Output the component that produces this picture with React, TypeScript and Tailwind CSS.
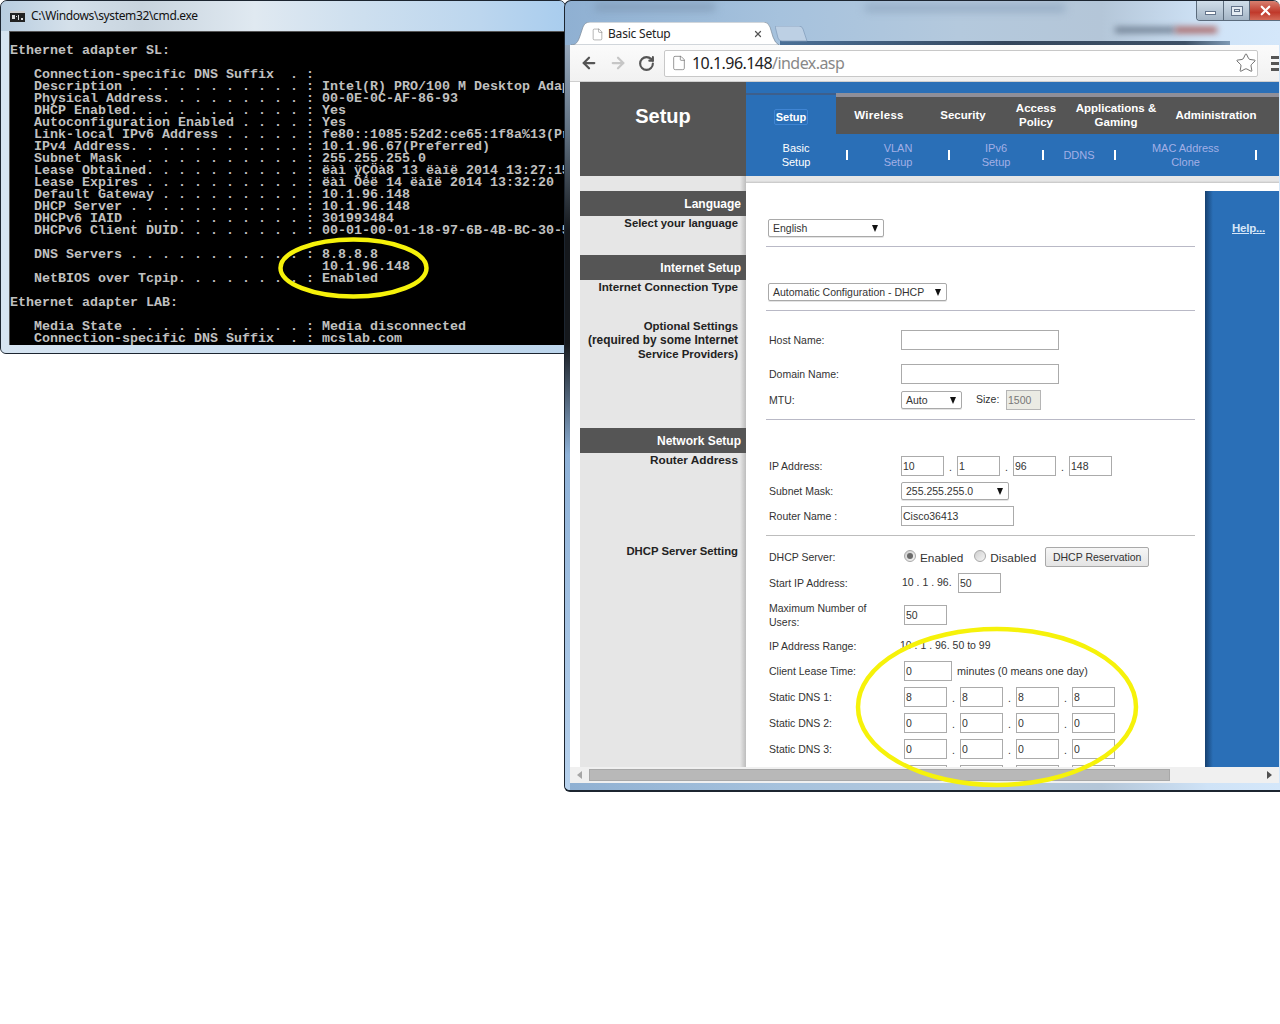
import React from "react";
import { ArrowLeft, ArrowRight, RotateCw, File, Star, X } from "lucide-react";

const cmdText = `Ethernet adapter SL:

   Connection-specific DNS Suffix  . :
   Description . . . . . . . . . . . : Intel(R) PRO/100 M Desktop Adapter
   Physical Address. . . . . . . . . : 00-0E-0C-AF-86-93
   DHCP Enabled. . . . . . . . . . . : Yes
   Autoconfiguration Enabled . . . . : Yes
   Link-local IPv6 Address . . . . . : fe80::1085:52d2:ce65:1f8a%13(Preferred)
   IPv4 Address. . . . . . . . . . . : 10.1.96.67(Preferred)
   Subnet Mask . . . . . . . . . . . : 255.255.255.0
   Lease Obtained. . . . . . . . . . : ëàì ÿÇÖà8 13 ëàîë 2014 13:27:15
   Lease Expires . . . . . . . . . . : ëàì Öêë 14 ëàîë 2014 13:32:20
   Default Gateway . . . . . . . . . : 10.1.96.148
   DHCP Server . . . . . . . . . . . : 10.1.96.148
   DHCPv6 IAID . . . . . . . . . . . : 301993484
   DHCPv6 Client DUID. . . . . . . . : 00-01-00-01-18-97-6B-4B-BC-30-5B

   DNS Servers . . . . . . . . . . . : 8.8.8.8
                                       10.1.96.148
   NetBIOS over Tcpip. . . . . . . . : Enabled

Ethernet adapter LAB:

   Media State . . . . . . . . . . . : Media disconnected
   Connection-specific DNS Suffix  . : mcslab.com`;

function CmdWindow() {
  return (
    <div className="absolute left-0 top-0 w-[566px] h-[354px] flex flex-col rounded-t-[7px] rounded-bl-[6px] border border-[#1c2530] overflow-hidden bg-[linear-gradient(90deg,#8fa0b2_0,#b9d3ec_40px,#b9d3ec_100%)]">
      <div className="h-[30px] shrink-0 flex items-center pl-[9px] gap-[6px] bg-[linear-gradient(90deg,#b8cde0_0%,#d4e0ea_12%,#c8d4de_25%,#e0e9f1_45%,#cfe0ef_62%,#bcd6ee_85%,#a9cdee_100%)]">
        <svg width="15" height="11" viewBox="0 0 15 11" className="shrink-0">
          <rect width="15" height="11" fill="#222" />
          <rect width="15" height="2" fill="#ccc" />
          <rect x="2" y="4" width="3" height="4" fill="#ddd" />
          <rect x="6" y="5" width="1" height="1" fill="#ddd" />
          <rect x="8" y="4" width="1" height="5" fill="#ddd" />
          <rect x="11" y="7" width="2" height="2" fill="#ddd" />
        </svg>
        <span className="font-['Noto_Sans',sans-serif] text-[12px] leading-none text-[#111] tracking-[-0.35px]">C:\Windows\system32\cmd.exe</span>
      </div>
      <div className="flex-1 min-h-0 flex bg-[linear-gradient(90deg,#d6e4f1,#bcd5ec)] pl-[8px]">
        <div className="flex-1 h-[314px] bg-black border-l border-t border-[#555] overflow-hidden pt-[13px]">
          <pre className="font-['Liberation_Mono',monospace] font-bold text-[13.33px] leading-[12px] text-[#c0c0c0] whitespace-pre">{cmdText}</pre>
        </div>
      </div>
    </div>
  );
}

const navFont = "font-['Liberation_Sans',Arial,sans-serif]";

function Sep() {
  return <div className="w-[2px] h-[10px] bg-white shrink-0" />;
}

function SubItem({ w, active, children }: { w: string; active?: boolean; children: React.ReactNode }) {
  return (
    <div className={`${w} shrink-0 text-center text-[11px] leading-[14px] ${active ? "text-white" : "text-[#a3afe6]"}`}>{children}</div>
  );
}

function TopItem({ w, children }: { w: string; children: React.ReactNode }) {
  return <div className={`${w} shrink-0 text-center font-bold text-[11.5px] leading-[14px] text-white`}>{children}</div>;
}

function Header() {
  return (
    <div className={`flex h-[94px] shrink-0 ${navFont}`}>
      <div className="w-[10px] bg-white shrink-0" />
      <div className="w-[166px] shrink-0 bg-[#555555] flex items-center justify-center pb-[26px]">
        <span className="text-white font-bold text-[20px] leading-none">Setup</span>
      </div>
      <div className="flex-1 flex flex-col bg-[#2a6fb7]">
        <div className="h-[52px] flex pt-[11px]">
          <div className="w-[90px] shrink-0 flex items-center justify-center border-t-2 border-[#3d5f8c] pt-[5px]">
            <span className="text-white font-bold text-[11px] leading-[14px] border border-[#3f85d4] rounded-[2px] px-[1px]">Setup</span>
          </div>
          <div className="flex-1 flex items-center bg-[#555555] border-t-[4px] border-[#8f8f99] pb-[1px]">
            <TopItem w="w-[86px]"><span className="tracking-[0.3px]">Wireless</span></TopItem>
            <TopItem w="w-[82px]">Security</TopItem>
            <TopItem w="w-[64px]">Access<br />Policy</TopItem>
            <TopItem w="w-[96px]">Applications &amp;<br />Gaming</TopItem>
            <TopItem w="w-[104px]">Administration</TopItem>
          </div>
        </div>
        <div className="flex-1 flex items-center">
          <SubItem w="w-[100px]" active>Basic<br />Setup</SubItem>
          <Sep />
          <SubItem w="w-[100px]">VLAN<br />Setup</SubItem>
          <Sep />
          <SubItem w="w-[92px]">IPv6<br />Setup</SubItem>
          <Sep />
          <SubItem w="w-[70px]">DDNS</SubItem>
          <Sep />
          <SubItem w="w-[139px]">MAC Address<br />Clone</SubItem>
          <Sep />
        </div>
      </div>
    </div>
  );
}

function SideBar({ className, children }: { className: string; children: React.ReactNode }) {
  return (
    <div className={`h-[25px] bg-[#555555] text-white font-bold text-[12px] leading-[27px] text-right pr-[5px] ${className}`}>{children}</div>
  );
}

function SideText({ className, children }: { className: string; children: React.ReactNode }) {
  return <div className={`font-bold leading-[14px] text-right pr-[8px] text-[#222] ${className}`}>{children}</div>;
}

function Sidebar() {
  return (
    <div className={`w-[166px] shrink-0 bg-[linear-gradient(90deg,#e6e6e6_0,#e6e6e6_160px,#bdbdbd_166px)] pt-[15px] ${navFont}`}>
      <SideBar className="">Language</SideBar>
      <SideText className="text-[11.3px]">Select your language</SideText>
      <SideBar className="mt-[25px]">Internet Setup</SideBar>
      <SideText className="text-[11.65px]">Internet Connection Type</SideText>
      <SideText className="mt-[25px] text-[11.4px]">Optional Settings</SideText>
      <SideText className="text-[11.9px]">(required by some Internet</SideText>
      <SideText className="text-[11.4px]">Service Providers)</SideText>
      <SideBar className="mt-[67px]">Network Setup</SideBar>
      <SideText className="text-[11.8px]">Router Address</SideText>
      <SideText className="mt-[77px] text-[11.3px]">DHCP Server Setting</SideText>
    </div>
  );
}

function Inp({ value, w = "w-[43px]" }: { value?: string; w?: string }) {
  return (
    <input
      readOnly
      value={value ?? ""}
      className={`${w} h-[20px] shrink-0 border border-[#ababab] bg-white px-[1px] pb-[1px] text-[10.5px] text-[#333] outline-none ${navFont}`}
    />
  );
}

function Sel({ w, text }: { w: string; text: string }) {
  return (
    <div className={`${w} h-[18px] shrink-0 border border-[#a9a9a9] rounded-[2px] bg-white flex items-center justify-between pl-[4px] pr-[5px] text-[10.5px] text-[#333] shadow-[0_1px_0_#e4e4e4]`}>
      <span className="pt-[1px]">{text}</span>
      <span className="w-0 h-0 border-x-[3.5px] border-x-transparent border-t-[7px] border-t-[#111] shrink-0" />
    </div>
  );
}

function Hr({ className }: { className: string }) {
  return <div className={`h-px bg-[#b9b9c6] ${className}`} />;
}

function Row({ label, wide, className, children }: { label: React.ReactNode; wide?: boolean; className: string; children?: React.ReactNode }) {
  return (
    <div className={`flex items-center h-[20px] pl-[3px] ${className}`}>
      <div className={`${wide ? "w-[135px]" : "w-[132px]"} shrink-0 leading-[14px]`}>{label}</div>
      {children}
    </div>
  );
}

function Dot() {
  return <span className="w-[13px] shrink-0 text-center pt-[3px]">.</span>;
}

function Quad({ a, b, c, d }: { a: string; b: string; c: string; d: string }) {
  return (
    <>
      <Inp value={a} />
      <Dot />
      <Inp value={b} />
      <Dot />
      <Inp value={c} />
      <Dot />
      <Inp value={d} />
    </>
  );
}

function Radio({ on }: { on?: boolean }) {
  return (
    <div className="w-[12px] h-[12px] rounded-full border border-[#a8a8a8] bg-[linear-gradient(135deg,#cfcfcf,#f5f5f5)] flex items-center justify-center mb-[3px] shrink-0">
      {on && <div className="w-[6px] h-[6px] rounded-full bg-[#6a6a6a]" />}
    </div>
  );
}

function Form() {
  return (
    <div className={`w-[459px] shrink-0 bg-white h-[584px] overflow-hidden pl-[20px] text-[10.5px] text-[#333] ${navFont}`}>
      <div className="w-[429px]">
        <div className="pt-[36px] ml-[2px]"><Sel w="w-[116px]" text="English" /></div>
        <Hr className="mt-[9px]" />
        <div className="mt-[36px] ml-[2px]"><Sel w="w-[179px]" text="Automatic Configuration - DHCP" /></div>
        <Hr className="mt-[9px]" />
        <Row label="Host Name:" className="mt-[19px]"><Inp w="w-[158px]" /></Row>
        <Row label="Domain Name:" className="mt-[14px]"><Inp w="w-[158px]" /></Row>
        <Row label="MTU:" className="mt-[6px]">
          <Sel w="w-[61px]" text="Auto" />
          <span className="ml-[14px] w-[30px] shrink-0">Size:</span>
          <input readOnly value="1500" className="w-[35px] h-[20px] shrink-0 border border-[#b5b5b5] bg-[#ebebe4] px-[1px] text-[10.5px] text-[#777] outline-none" />
        </Row>
        <Hr className="mt-[9px]" />
        <Row label="IP Address:" className="mt-[36px]"><Quad a="10" b="1" c="96" d="148" /></Row>
        <Row label="Subnet Mask:" className="mt-[6px] !h-[18px]"><Sel w="w-[108px]" text="255.255.255.0" /></Row>
        <Row label="Router Name :" className="mt-[6px]"><Inp w="w-[113px]" value="Cisco36413" /></Row>
        <Hr className="mt-[9px] bg-[#bdbdbd]" />
        <Row label="DHCP Server:" wide className="mt-[11px]">
          <Radio on />
          <span className="ml-[4px] pt-[4px] text-[11.8px]">Enabled</span>
          <div className="ml-[11px]"><Radio /></div>
          <span className="ml-[4px] pt-[4px] text-[11.8px]">Disabled</span>
          <div className="ml-[9px] w-[104px] h-[20px] shrink-0 border border-[#a9a9a9] rounded-[2px] bg-[linear-gradient(#f6f6f6,#e4e4e4)] text-center leading-[18px]">DHCP Reservation</div>
        </Row>
        <Row label="Start IP Address:" className="mt-[6px]">
          <span className="w-[57px] shrink-0 pl-[1px]">10 . 1 . 96.</span>
          <Inp value="50" />
        </Row>
        <Row label={<>Maximum Number of<br />Users:</>} wide className="mt-[12px]"><Inp value="50" /></Row>
        <Row label="IP Address Range:" className="mt-[11px]"><span className="-ml-[1px]">10 . 1 . 96. 50 to 99</span></Row>
        <Row label="Client Lease Time:" wide className="mt-[5px]">
          <Inp value="0" w="w-[48px]" />
          <span className="ml-[5px] text-[10.8px]">minutes (0 means one day)</span>
        </Row>
        <Row label="Static DNS 1:" wide className="mt-[6px]"><Quad a="8" b="8" c="8" d="8" /></Row>
        <Row label="Static DNS 2:" wide className="mt-[6px]"><Quad a="0" b="0" c="0" d="0" /></Row>
        <Row label="Static DNS 3:" wide className="mt-[6px]"><Quad a="0" b="0" c="0" d="0" /></Row>
        <Row label="" wide className="mt-[6px]"><Quad a="" b="" c="" d="" /></Row>
      </div>
    </div>
  );
}

function Body() {
  return (
    <div className="flex-1 min-h-0 flex overflow-hidden bg-white">
      <div className="w-[10px] bg-white shrink-0" />
      <Sidebar />
      <div className="flex-1 flex flex-col min-w-0">
        <div className="h-[7px] shrink-0 bg-[linear-gradient(#e6e6e6,#e6e6e6_70%,#c4c4c4)]" />
        <div className="flex-1 flex min-h-0">
          <Form />
          <div className="flex-1 flex flex-col">
            <div className="h-[8px] shrink-0 bg-white" />
            <div className={`flex-1 bg-[linear-gradient(90deg,#16406f_0,#2a6fb7_8px)] pl-[27px] pt-[30px] ${navFont}`}>
              <span className="block leading-[14px] text-[#d6e6f7] font-bold underline text-[11.5px] tracking-[-0.2px]">Help...</span>
            </div>
          </div>
        </div>
      </div>
    </div>
  );
}

function Scrollbar() {
  return (
    <div className="h-[16px] shrink-0 bg-[#f0f0f0] flex items-center pl-[7px] pr-[7px]">
      <div className="w-0 h-0 border-y-[4px] border-y-transparent border-r-[5px] border-r-[#a6a6a6] shrink-0" />
      <div className="ml-[7px] w-[581px] h-[12px] shrink-0 bg-[#b8b8b8] border border-[#a8a8a8]" />
      <div className="flex-1" />
      <div className="w-0 h-0 border-y-[4px] border-y-transparent border-l-[5px] border-l-[#505050] shrink-0" />
    </div>
  );
}

function Tabs() {
  return (
    <div className="relative h-[44px] shrink-0">
      <div className="absolute left-[30px] top-[3px] w-[120px] h-[6px] bg-[#7f98b3] blur-[4px]" />
      <div className="absolute left-[300px] top-[4px] w-[200px] h-[6px] bg-[#8ea6bf] blur-[4px]" />
      <div className="absolute left-[550px] top-[26px] w-[60px] h-[6px] bg-[#6f7f92] blur-[3px]" />
      <div className="absolute left-[610px] top-[26px] w-[42px] h-[6px] bg-[#a8605e] blur-[3px]" />
      <div className="absolute left-[215px] top-[40px] w-[450px] h-[4px] bg-[linear-gradient(90deg,#4a6f96,#34465c_50%,#3d5066_90%,#7f9ab5)]" />
      <svg className="absolute left-[6px] top-[21px]" width="208" height="23" viewBox="0 0 208 23">
        <path d="M0 23 C5 23 7 20 9 14 L12 5 Q14 0 19 0 L193 0 Q197 0 199 5 L202 15 Q204 21 208 23 Z" fill="#ffffff" stroke="#7d8b99" strokeWidth="0.7" />
      </svg>
      <svg className="absolute left-[210px] top-[25px]" width="34" height="16" viewBox="0 0 34 16">
        <path d="M0 0 L24 0 Q27 0 28 3 L32 15 L7 15 Q4 15 3 12 Z" fill="#bdd0e4" stroke="#7e99b8" strokeWidth="0.7" />
      </svg>
      <div className="absolute left-[26px] top-[27px] flex items-center h-[12px]">
        <File size={13} strokeWidth={1} className="text-[#777]" />
        <span className="ml-[4px] w-[145px] font-['Noto_Sans',sans-serif] text-[12px] leading-none text-[#222] tracking-[-0.2px]">Basic Setup</span>
        <X size={10} strokeWidth={3} className="text-[#555]" />
      </div>
      <div className="absolute right-0 top-0 flex h-[20px] border-b border-l border-[#5b6b7c] rounded-bl-[4px] overflow-hidden">
        <div className="w-[27px] flex items-center justify-center bg-[linear-gradient(#d0deea,#a4b5c6)] border-r border-[#5b6b7c]">
          <div className="w-[11px] h-[4px] mt-[4px] bg-white border border-[#64748b]" />
        </div>
        <div className="w-[26px] flex items-center justify-center bg-[linear-gradient(#d0deea,#a4b5c6)] border-r border-[#5b6b7c]">
          <div className="w-[12px] h-[10px] bg-[#e4ecf3] border border-[#64748b] flex items-center justify-center">
            <div className="w-[6px] h-[3px] border border-[#64748b]" />
          </div>
        </div>
        <div className="w-[30px] flex items-center pl-[8px] bg-[linear-gradient(#d88070,#c0392b_60%,#d46a58)]">
          <X size={15} strokeWidth={3.5} className="text-white shrink-0" />
        </div>
      </div>
    </div>
  );
}

function Toolbar() {
  return (
    <div className="h-[37px] shrink-0 bg-[linear-gradient(#fbfbfb,#f1f1f1)] border-b border-[#cfcfcf] flex items-center pl-[10px]">
      <ArrowLeft size={18} strokeWidth={3} className="text-[#555] shrink-0" />
      <ArrowRight size={18} strokeWidth={3} className="text-[#c6c6c6] ml-[11px] shrink-0" />
      <RotateCw size={17} strokeWidth={3} className="text-[#555] ml-[11px] shrink-0" />
      <div className="ml-[9px] w-[594px] h-[27px] shrink-0 bg-white border border-[#c8c8c8] rounded-[2px] flex items-center pl-[6px]">
        <File size={16} strokeWidth={1} className="text-[#666] shrink-0" />
        <span className="ml-[5px] font-['Noto_Sans',sans-serif] text-[16px] leading-none tracking-[-0.55px] text-[#222]">10.1.96.148<span className="text-[#888]">/index.asp</span></span>
        <div className="flex-1" />
        <Star size={22} strokeWidth={1} className="text-[#666] shrink-0" />
      </div>
      <div className="ml-[13px] w-[8px] flex flex-col gap-[3px]">
        <div className="h-[3px] bg-[#555]" />
        <div className="h-[3px] bg-[#555]" />
        <div className="h-[3px] bg-[#555]" />
      </div>
    </div>
  );
}

function BrowserWindow() {
  return (
    <div className="absolute left-[564px] top-0 w-[716px] h-[792px] flex flex-col rounded-t-[7px] rounded-bl-[6px] border-t border-l border-b-2 border-[#1c2530] overflow-hidden bg-[linear-gradient(90deg,#8fb0d2_0%,#a6c2dd_30%,#b4c9dd_55%,#b4c6d8_75%,#cfe3f7_90%,#d4e7fa_100%)]">
      <Tabs />
      <div className="flex-1 min-h-0 flex flex-col ml-[5px] mr-[1px] mb-[7px]">
        <Toolbar />
        <Header />
        <Body />
        <Scrollbar />
      </div>
      <div className="absolute left-0 top-[44px] bottom-0 w-[5px] bg-[linear-gradient(#96a8bc_0%,#5f6f7f_12%,#15181c_25%,#15181c_40%,#8fb2d8_55%,#b9d3ee_100%)]" />
    </div>
  );
}

export default function App() {
  return (
    <div className="relative w-[1280px] h-[1024px] overflow-hidden bg-white">
      <CmdWindow />
      <BrowserWindow />
      <svg className="absolute left-0 top-0 pointer-events-none" width="1280" height="1024" viewBox="0 0 1280 1024">
        <ellipse cx="353.5" cy="268" rx="73" ry="28.5" fill="none" stroke="#f6f20a" strokeWidth="4.5" />
        <ellipse cx="997" cy="707" rx="139" ry="78" fill="none" stroke="#f6f20a" strokeWidth="4.5" />
      </svg>
    </div>
  );
}
